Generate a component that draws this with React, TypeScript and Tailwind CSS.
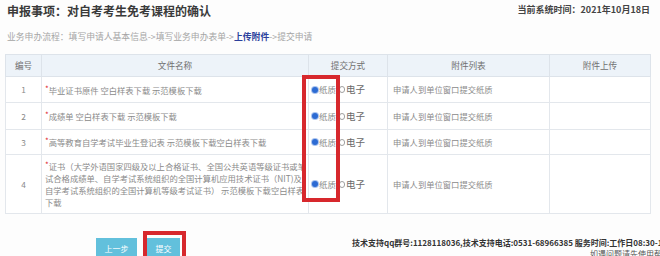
const rows = [
  { no: "1", lines: ["毕业证书原件 空白样表下载 示范模板下载"], h: "h-[26px]" },
  { no: "2", lines: ["成绩单 空白样表下载 示范模板下载"], h: "h-[27px]" },
  { no: "3", lines: ["高等教育自学考试毕业生登记表 示范模板下载空白样表下载"], h: "h-[25px]" },
  {
    no: "4",
    lines: [
      "证书（大学外语国家四级及以上合格证书、全国公共英语等级证书或笔",
      "试合格成绩单、自学考试系统组织的全国计算机应用技术证书（NIT)及",
      "自学考试系统组织的全国计算机等级考试证书） 示范模板下载空白样表",
      "下载",
    ],
    h: "h-[59px]",
  },
];

const Radio = ({ checked }: { checked?: boolean }) =>
  checked ? (
    <span className="inline-block w-[6px] h-[6px] rounded-full bg-[#2d6bd3] ring-1 ring-[#a9c3ee]" />
  ) : (
    <span className="inline-block w-[6px] h-[7px] rounded-full border border-[#a0a0a0] bg-white" />
  );

export default function App() {
  return (
    <div
      className="relative w-[660px] h-[256px] overflow-hidden bg-[#fdfdfd] text-[#777]"
      style={{ fontFamily: '"Noto Sans CJK SC", "Noto Sans", sans-serif' }}
    >
      {/* Header */}
      <div className="flex justify-between items-start pl-[7px] pr-[10px] pt-[3px]">
        <h1 className="text-[12px] leading-[16px] font-bold text-[#3a3a3a]">申报事项：对自考考生免考课程的确认</h1>
        <div className="text-[9px] leading-[12px] font-bold text-[#444] mt-[1px]">当前系统时间：2021年10月18日</div>
      </div>

      {/* Breadcrumb */}
      <div className="pl-[7px] mt-[12px] text-[8.8px] leading-[12px] text-[#a5a5a5] whitespace-nowrap">
        业务申办流程：填写申请人基本信息-&gt;填写业务申办表单-&gt;<span className="font-bold text-[#2b3f9c]">上传附件</span>-&gt;提交申请
      </div>

      {/* Table */}
      <table className="ml-[5px] mt-[11px] w-[645px] table-fixed border-collapse text-[8.3px]">
        <colgroup>
          <col className="w-[36px]" />
          <col className="w-[267px]" />
          <col className="w-[79px]" />
          <col className="w-[162px]" />
          <col className="w-[101px]" />
        </colgroup>
        <thead>
          <tr className="h-[22px] bg-[#edf3f9] text-[#707070] text-[8.6px]">
            <th className="font-normal border border-[#dde3ea]">编号</th>
            <th className="font-normal border border-[#dde3ea]">文件名称</th>
            <th className="font-normal border border-[#dde3ea]">提交方式</th>
            <th className="font-normal border border-[#dde3ea]">附件列表</th>
            <th className="font-normal border border-[#dde3ea]">附件上传</th>
          </tr>
        </thead>
        <tbody className="bg-white">
          {rows.map((r) => (
            <tr key={r.no} className={r.h}>
              <td className="border border-[#e3e7ec] text-center text-[#8a8a8a]">{r.no}</td>
              <td className="border border-[#e3e7ec] pl-[3px] pr-[2px] leading-[12px] text-[#8a8a8a] whitespace-nowrap">
                {r.lines.map((line, i) => (
                  <div key={i}>
                    {i === 0 && <span className="text-[#e0282d] text-[8px] leading-none relative -top-[2px]">*</span>}
                    {line}
                  </div>
                ))}
              </td>
              <td className="border border-[#e3e7ec] pl-[3px] whitespace-nowrap">
                <span className="inline-flex items-center gap-[1px]">
                  <Radio checked />
                  <span className="text-[8.5px] text-[#8a8a8a] mr-[2px]">纸质</span>
                  <Radio />
                  <span className="text-[9.5px] text-[#6a6a6a]">电子</span>
                </span>
              </td>
              <td className="border border-[#e3e7ec] pl-[5px] text-[#8a8a8a]">申请人到单位窗口提交纸质</td>
              <td className="border border-[#e3e7ec]" />
            </tr>
          ))}
        </tbody>
      </table>

      {/* Bottom bar */}
      <div className="flex items-start mt-[17px]">
        <div className="flex gap-[10px] ml-[96px] mt-[7px]">
          <button className="w-[41px] h-[22px] bg-[#62c0dc] text-white text-[8px]">上一步</button>
          <button className="w-[33px] h-[22px] bg-[#62c0dc] text-white text-[8px]">提交</button>
        </div>
        <div className="ml-[172px] mt-[6px] whitespace-nowrap text-[8px] leading-[11px] font-bold text-[#333]">
          <div>技术支持qq群号:1128118036,技术支持电话:0531-68966385 服务时间:工作日08:30-17:00</div>
          <div className="pl-[238px] font-normal text-[#555]">如遇问题请先使用帮助</div>
        </div>
      </div>

      {/* Red highlight boxes */}
      <div className="absolute left-[302px] top-[75px] w-[38px] h-[127px] border-[4px] border-[#d7282d]" />
      <div className="absolute left-[143px] top-[231px] w-[43px] h-[30px] border-[4px] border-[#d7282d]" />
    </div>
  );
}
